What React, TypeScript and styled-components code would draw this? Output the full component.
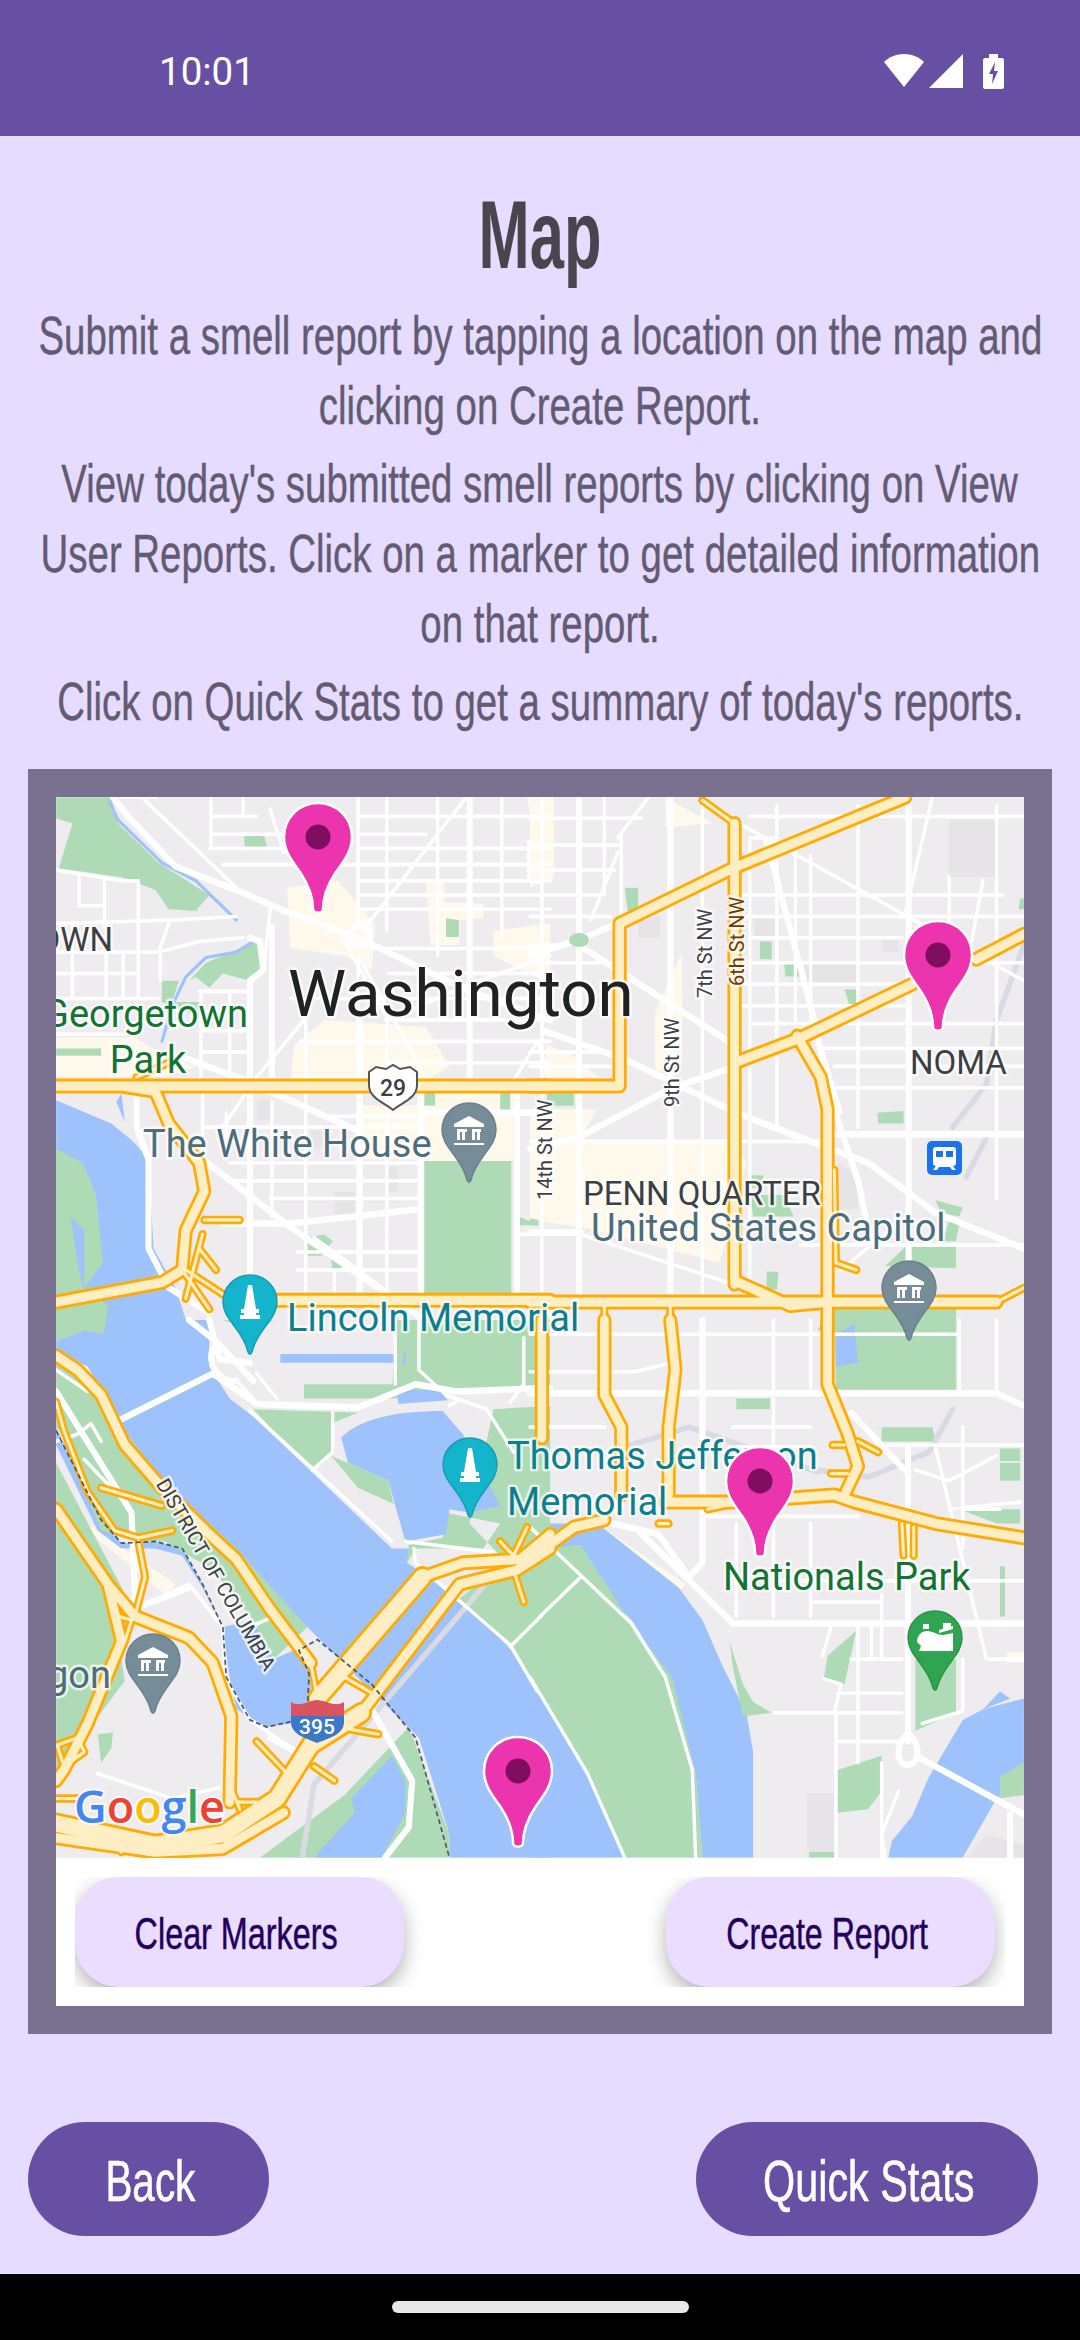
import React from 'react'
import styled, { createGlobalStyle } from 'styled-components'

const GlobalStyle = createGlobalStyle`
	html, body {
		margin: 0;
		padding: 0;
		background: #000;
	}
`

const Screen = styled.div`
	width: 1080px;
	height: 2340px;
	display: flex;
	flex-direction: column;
	overflow: hidden;
	background: #e5dcff;
	font-family: 'Liberation Sans', Arial, sans-serif;
`

const StatusBar = styled.div`
	height: 136px;
	flex: none;
	box-sizing: border-box;
	padding: 52px 76px 0 159px;
	display: flex;
	justify-content: space-between;
	align-items: flex-start;
	background: #674fa3;
	color: #fff;
`

const Clock = styled.span`
	font-family: Roboto, sans-serif;
	font-size: 38.5px;
	line-height: 40px;
	font-weight: 400;
`

const StatusIcons = styled.div`
	display: flex;
	align-items: flex-start;
	gap: 5px;
	margin-top: 2px;
`

const Main = styled.main`
	flex: 1;
	display: flex;
	flex-direction: column;
	padding-top: 39px;
`

const Title = styled.h1`
	margin: 0 0 6px;
	display: flex;
	justify-content: center;
	font-size: 96px;
	line-height: 120px;
	font-weight: 700;
	color: #49454f;
`

const Para = styled.p`
	margin: 0 0 8px;
	display: flex;
	flex-direction: column;
	align-items: center;
	font-size: 53px;
	line-height: 70px;
	color: #625b71;
	-webkit-text-stroke: 0.4px #625b71;
`

const Squeezed = styled.span<{ $sx: number }>`
	flex: none;
	display: block;
	white-space: nowrap;
	transform: scaleX(${p => p.$sx});
`

const MapFrame = styled.section`
	margin: 24px 28px 0;
	height: 1265px;
	box-sizing: border-box;
	border: 28px solid #79718f;
	background: #fff;
	display: flex;
	flex-direction: column;
`

const MapCanvas = styled.svg`
	display: block;
	width: 968px;
	height: 1061px;
	flex: none;
	background: #efecf0;
`

const MapActions = styled.div`
	margin: 19px 19px 19px;
	padding-right: 10px;
	height: 110px;
	display: flex;
	justify-content: space-between;
	overflow: hidden;
`

const MapButton = styled.button`
	width: 329px;
	height: 110px;
	padding: 4px 7px 0 0;
	border: none;
	border-radius: 44px;
	display: flex;
	align-items: center;
	justify-content: center;
	background: #eaddff;
	color: #21005d;
	font-family: inherit;
	font-size: 44px;
	-webkit-text-stroke: 0.5px #21005d;
	box-shadow: 0 8px 20px rgba(0, 0, 0, 0.3);
`

const BottomRow = styled.div`
	margin-top: auto;
	padding: 0 42px 38px 28px;
	display: flex;
	justify-content: space-between;
`

const NavButton = styled.button<{ $width: number }>`
	width: ${p => p.$width}px;
	height: 114px;
	padding: 3px 0 0 3px;
	border: none;
	border-radius: 57px;
	display: flex;
	align-items: center;
	justify-content: center;
	background: #674fa3;
	color: #fff;
	font-family: inherit;
	font-size: 57px;
	-webkit-text-stroke: 0.6px #fff;
`

const GestureBar = styled.div`
	height: 66px;
	flex: none;
	display: flex;
	justify-content: center;
	padding-top: 27px;
	box-sizing: border-box;
	background: #000;
`

const GestureHandle = styled.div`
	width: 297px;
	height: 12px;
	border-radius: 6px;
	background: #e8e8e8;
`

const Label = styled.text<{ $color: string; $size: number }>`
	font-family: Roboto, sans-serif;
	font-size: ${p => p.$size}px;
	fill: ${p => p.$color};
	paint-order: stroke;
	stroke: rgba(255, 255, 255, 0.72);
	stroke-width: 5px;
	stroke-linejoin: round;
`

const ShieldText = styled.text<{ $color: string; $size: number }>`
	font-family: Roboto, sans-serif;
	font-weight: 500;
	font-size: ${p => p.$size}px;
	fill: ${p => p.$color};
	text-anchor: middle;
`

const GoogleMark = styled.text`
	font-family: 'Open Sans', Roboto, sans-serif;
	font-size: 45px;
	font-weight: 600;
	paint-order: stroke;
	stroke: rgba(255, 255, 255, 0.8);
	stroke-width: 4px;
`

// each sheet holds shapes in the coordinates of one map quarter, its transform is in SHEET_MATRIX
type Sheet = {
	tint: string
	block: string
	water: string
	park: string
	pond: string
	creek: string
	rail: string
	street: string
	avenue: string
	ramp: string
	highway: string
	trunk: string
}

const SHEET_MATRIX = [
	'matrix(.3381 0 0 .3571 20 770)',
	'matrix(.3381 0 0 .3571 530 770)',
	'matrix(.3381 0 0 .3571 20 1320)',
	'matrix(.3381 0 0 .3571 530 1320)',
]

const SHEETS: Sheet[] = [
	{
		tint: 'M790 330L940 310L1050 430L1040 560L960 520L800 500Z M1200 310H1255V370L1370 375V415L1300 420V490H1215Z M1400 450L1568 430V600L1400 520Z M810 770L900 700L1200 720L1270 830L1200 870H800Z M107 750H340L430 800L520 830L430 860H107Z M1500 76H1568V300L1530 260Z M1190 900H1460V1095H1190Z M1000 940H1200V1090H1000Z',
		block: 'M860 1010H900V1060H860Z M1090 1110H1120V1180H1090Z M930 1180H990V1250H930Z M700 925H740V980H700Z',
		water: 'M107 925L270 990L335 1040L380 1090L395 1340L460 1450L500 1568H107Z M285 930L300 905L310 985Z',
		park: 'M107 76H270L290 150L410 260L560 350L520 395L440 390L400 335L300 300L115 275L155 150L107 135Z M662 180L720 175L730 215H665Z M1260 415L1298 420V468H1260Z M500 590L550 540L700 480L710 560L680 590L600 570L560 610L520 580Z M420 590H470L450 650H530V690L420 650Z M107 780H240V800H107Z M1196 1095H1453V1470H1196Z M1475 1250L1535 1275H1475Z M1420 900H1450V960H1420Z M1196 900H1228V940H1196Z M107 1060L185 1100L225 1190L245 1380L190 1450L260 1500L250 1568H107Z M850 1310L900 1300L925 1320L890 1360H850Z M920 1370L960 1390L925 1400Z M340 1040L380 1100L370 1090Z',
		pond: 'M150 1250L190 1290V1460L170 1380Z',
		creek: 'M265 90L290 140L420 260L520 310L640 420 M690 480L640 510L550 525L490 580L450 660L420 760',
		rail: '',
		street:
			'M565 76V215 M660 76V130 M740 110L780 230 M1000 76V440 M1085 76V450 M1235 76V520 M1425 76V470 M1505 200V300 M1000 520V1470 M1085 700V1470 M845 700V1470 M745 440V860 M175 300V380 M250 310V440 M350 310V640 M155 430V640 M255 430V640 M305 510V640 M415 510V590 M535 620V860 M620 620V860 M540 910V1080 M610 960V1090 M745 930V1250 M930 1400V1470 M565 130H700 M565 180H780 M560 220H780 M600 265H1568 M1000 130H1568 M1000 180H1200 M1000 220H1568 M1000 310H1568 M1000 350H1500 M1000 390H1568 M107 280L300 310H350 M175 380H250 M107 430L450 420L640 410 M107 510H410L530 480L660 470 M107 570H350 M107 640H410 M530 620H680 M107 740H340 M535 730H680 M535 790H680 M800 640H1568 M1040 500H1568 M1090 570H1568 M1080 700H1568 M830 760H1568 M1090 820H1568 M900 970H1190 M540 1000H1190 M620 1100H1180 M620 1150H1180 M740 1200H1180 M820 1350H1180 M820 1400H1180 M1470 1300H1568 M1030 430L1320 76 M840 700L700 860L600 1000 M1000 520L1200 860 M960 480L1090 700 M740 390L720 560 M1460 870L1530 760L1568 870 M1568 520L1330 600L1090 700 M870 1310L1100 1470 M300 76L400 76 M360 76L640 330 M440 430L410 510',
		avenue:
			'M275 76L320 130L460 270L650 340L770 390L1000 470L1330 620L1568 700 M1330 76V900 M680 590V1470 M745 860V440 M470 800L640 860L690 880L1000 1010 M540 1090L800 1280L1180 1530 M345 900V1000L380 1090V1340L440 1450L560 1520 M600 1270H800L1180 1230 M1005 700V1470 M1190 960H1568 M1470 900V1470 M1185 900V1470 M680 470L710 480L720 560L680 590 M1005 465m-30 0a30 30 0 1 0 60 0a30 30 0 1 0 -60 0',
		ramp: 'M545 1260H650 M490 1400L620 1480 M530 1340L580 1400 M480 1400L560 1510 M540 1300L490 1480 M345 860L440 820',
		highway: 'M107 885H1568 M480 1400L420 1435L107 1490 M300 885L400 900L440 990L530 1100L545 1180L490 1290L480 1400 M620 1485H1568',
		trunk: '',
	},
	{
		tint: 'M0 76H70V300L0 330Z M400 76L540 150L400 160Z M0 950H200L140 1040H600L640 1100L590 1280L560 1380L400 1340L150 1280L0 1260Z M370 680L450 510V820L370 850Z M50 770L130 800L200 860H40Z',
		block: 'M1240 140H1380V300H1240Z M810 540H965V605H820Z M660 415H730L735 470H665Z M1040 475H1090V510H1040Z M320 410H385V470H320Z M910 1100L970 1130V1230H910Z',
		water: '',
		park: 'M280 330H320V390L290 400Z M680 480H715V530H680Z M752 540H790L800 578H755Z M930 615H965V660H945Z M1028 960L1105 955V990H1030Z M50 900L130 905V940H50Z M650 1190H750L780 1250H660Z M700 1405H735L730 1455H700Z M1050 1390L1110 1335H1260V1395Z M1200 1205L1280 1225L1270 1250L1215 1240Z M1240 1260L1270 1270L1260 1320H1220Z M900 1500H1260V1568H850Z M1450 360H1461V390H1445Z M0 1255L25 1260V1275H0Z M655 1135H690V1170H655Z',
		pond: '',
		creek: '',
		rail: 'M1461 490L1380 700L1350 880L1250 1000 M1350 1030L1290 1140',
		street:
			'M35 76V1470 M220 76V350 M270 180V560 M510 76V1470 M650 200V1470 M730 100V1000 M785 200V700 M830 240V700 M970 100V1000 M1240 300V650 M1380 100V1200 M270 700V900 M0 135H330 M0 210H270 M0 280H250 M0 350H210 M0 410H240 M0 490H100 M0 540H280 M0 790H250 M0 830H250 M650 130H1461 M650 190H720 M620 350H1400 M620 410H1461 M650 470H1100 M650 540H1461 M620 600H1100 M620 660H1120 M650 710H1461 M870 780H1461 M900 830H1461 M900 890H1461 M0 1040H860 M0 1300H150L600 1440 M800 1330H1461 M260 230L180 420 M350 76L260 190 M1190 76L1110 400 M1461 590L620 150 M850 740L920 960 M1340 310L1290 560 M920 1400L1100 1260',
		avenue:
			'M145 76V1470 M415 76V1470 M1120 76V1470 M700 200L830 660L900 950L970 1150L1010 1330 M0 520L145 475L260 430 M160 500L620 780 M40 730L280 810L610 960L830 1040L1000 1100L1200 1240L1461 1340 M0 1060L140 1030L420 890L610 830 M900 1020H1461 M0 1295H150',
		ramp: 'M220 1490V1568 M415 1490V1568 M510 85L605 150 M905 1380L965 1400 M1380 1490L1461 1450 M900 1120L905 1380',
		highway:
			'M0 885H265V430L600 275L1110 76 M605 150V1440 M605 820L800 750L1130 600 M1320 530L1461 460 M790 745L860 860L880 950V1568 M0 1490H1380 M605 1430L770 1500L880 1490',
		trunk: '',
	},
	{
		tint: 'M200 570L460 740L430 770L200 590Z',
		block: '',
		water:
			'M107 0H560V130L620 220L690 270L1100 640H1160L1145 680L1300 780L1450 920L1568 1070V1505H1270V1440L1180 1170L1050 1050L850 860L640 660L500 560L420 470L280 270L200 130L107 90Z M600 860L620 1000L640 1090L730 1140L800 1130L860 1090V990L820 920L750 950L690 840Z M107 300L240 560L300 625L400 620L480 640L540 740L600 860L540 750L480 660L400 640H300L230 590L107 350Z',
		park: 'M107 90L280 270L420 450L640 640L850 860L750 950L690 840L570 700L430 620H350L240 590L130 320L107 300Z M107 400L340 820L300 950L310 1010L200 1150L107 1270Z M107 0H230L250 40L190 30L107 60Z M1110 0H1568V200H1270L1100 220Z M840 180H1110V220H840Z M690 250L1000 260L920 290L930 370L860 420Z M920 380L1090 450L1105 515L1000 470Z M1145 680L1170 640H1370L1420 570L1260 540L1250 610L1150 630Z M1400 250L1568 240V600L1480 680H1440L1330 570Z M1380 720L1568 640V1100L1450 910L1300 780Z M710 1505L960 1330L1090 1200L1150 1140L1270 1440V1505Z M230 1160L275 1155L270 1200L240 1240Z M600 0H750L700 30Z',
		pond: 'M770 95H1110V120H770Z M1115 210L1130 195H1240L1265 225L1120 235Z M950 330C1000 280 1100 255 1250 255L1310 320L1420 520L1330 540L1270 530L1260 600L1140 620L1110 520L1090 450L970 400Z M1130 120L1140 80V125Z M980 1340L1100 1220L1140 1290V1380L1070 1505H870L990 1380Z',
		creek: '',
		rail: 'M1390 725L870 1300L835 1505',
		street:
			'M1180 0V140L1260 210L1380 250L1460 370 M1165 640L1170 680L1450 910L1530 1040 M1140 620L1400 650 M680 255L1100 620 M1540 830L1450 915 M690 855L740 835 M360 800L500 740L600 860L605 1000L680 1120L820 1210 M170 320L210 290L240 340 M107 140L200 200 M107 340L170 320 M190 390L320 520 M230 1270L450 1340L590 1310 M925 260V370L865 420 M1490 50V180L1450 230 M700 150L760 220 M650 180L690 220 M1110 0V180 M1290 230L1270 240',
		avenue:
			'M285 285L570 150 M570 150L700 235L1000 245L1170 180L1290 200L1568 190 M107 200L330 540L340 780 M1040 1090L1160 1290L1150 1420L1080 1505 M570 80C550 130 600 180 640 170 M560 0L590 110L680 120 M500 0L580 60L690 170 M740 1170L820 1210 M360 800L500 750',
		ramp: 'M107 230L130 310L200 480L280 590L350 610L450 590 M350 620L370 720L340 830 M240 470L420 520 M860 960L880 1060L960 1000L1050 1050 M1420 620L1460 660L1500 580 M1460 700L1490 790 M700 1180L790 1270 M870 1250L930 1290 M110 1190L170 1170L190 1210L130 1250Z M290 830L330 840L310 900L290 860Z M250 1440L300 1490 M640 1350H700 M880 1130L1060 1160 M107 1340H180 M620 1300L650 1370',
		highway:
			'M107 100L170 140L240 210L310 350L420 470L560 600L640 670L740 810L860 960 M107 530L260 740L340 830 M340 830L500 890L570 960L625 1110L620 1350 M260 740L300 900L200 1130L130 1260L107 1290 M107 1450L400 1490L600 1480L780 1380 M1010 1100L1300 740L1470 700L1568 640 M1190 720L1310 680L1480 670L1568 600',
		trunk: 'M107 1410L400 1470L600 1440L760 1340L860 1190L1010 1100 M880 1060L1190 720',
	},
	{
		tint: 'M200 570L460 740L430 770L200 590Z M1410 930H1461V960H1410Z',
		block: 'M820 1325H900V1490H820Z M1350 1440L1461 1470V1505H1290Z',
		water:
			'M30 570H200L440 750L510 840L570 970L640 1100L660 1210V1505H510L490 1270L420 1020L300 840L150 700L50 660L0 690V570Z M0 1000L180 1290L280 1505H0Z M1060 1505L1070 1460L1130 1390L1180 1280L1280 1120L1340 1090L1461 1060V1300L1380 1340L1280 1505Z M1390 1040L1420 1060L1340 1090Z',
		park: 'M610 220H710V250H610Z M1040 300H1190L1200 340H1040Z M1390 360H1450V395H1390Z M1390 400H1450V450H1390Z M1270 530H1450V570H1380Z M900 0H1260V195H905Z M1140 950H1260V1100L1140 1150Z M880 940L965 870L930 1020L870 1000Z M910 1260L1040 1220V1320L1000 1370L910 1380Z M590 900L600 970L630 1110L715 1100L660 1070L630 1020Z M1390 690H1405V830H1390Z M0 680L50 640L150 630L300 850L420 1000L490 1270L510 1505H280L180 1290L0 990Z M1390 1280L1461 1240V1330L1390 1340Z M825 1490H900V1505H825Z',
		pond: 'M905 40L960 10L970 120L905 130Z',
		creek: '',
		rail: 'M850 420L1000 440L1180 370L1250 250 M300 350L470 300L850 425',
		street:
			'M720 0V200 M720 220V830 M830 0V190 M1270 0V200 M1380 0V200 M610 570V830 M830 570V830 M1040 770V950 M970 860V1240 M1010 860V950 M905 1100V1505 M1040 1240V1505 M0 40H1270 M0 145H310L420 120 M600 300H830 M610 355H830 M520 550H970 M1060 350H1461 M0 300H220 M720 730H1461 M830 790H1040 M950 950H1100 M910 1045H1100 M905 1100H1100 M720 1100H900 M905 1180H1100 M1200 360L1350 950H1461 M1140 420L1240 450L1380 380 M1240 530L1450 510 M30 830L150 720 M0 580L300 850L400 1000L480 1260L490 1505 M0 1000L170 1270L280 1505 M870 1005L920 1020L900 1100 M865 940L890 860 M1160 1130L1280 1095V950 M1090 1320L1040 1440L1050 1505 M1280 300V640 M1280 530H1390',
		avenue:
			'M510 0V680 M1118 360V1180 M0 205H1380L1461 240 M320 590L580 830L600 850H1461 M200 560L380 600L470 720 M950 260L1118 430 M1150 1225L1461 1385 M1420 1385V1505 M1118 1160C1080 1180 1080 1250 1118 1245C1160 1245 1150 1170 1118 1160 M470 720L510 680',
		ramp: 'M970 340L1030 370 M1100 570L1105 660 M1135 580V660 M895 350H930 M890 430H940 M380 570H410 M525 530L600 515',
		highway: 'M35 0V330 M220 0V210L270 300V490 M415 0L430 140L410 300V490 M880 0V180L940 320L970 410L930 490 M400 510H600L900 490L960 510L1200 570L1461 610 M0 670L130 580L220 560',
		trunk: '',
	},
]

type LayerProps = React.SVGProps<SVGPathElement> & { sheetKey: keyof Sheet }

function Layer({ sheetKey, ...rest }: LayerProps) {
	return (
		<>
			{SHEETS.map((sheet, i) => (
				<path key={i} transform={SHEET_MATRIX[i]} d={sheet[sheetKey]} {...rest} />
			))}
		</>
	)
}

function lineProps(stroke: string, strokeWidth: number) {
	return { fill: 'none', stroke, strokeWidth, strokeLinejoin: 'round' as const, strokeLinecap: 'round' as const }
}

const PIN_PATH =
	'M0 -34C19 -34 34 -19 34 0C34 14 26 24 18 35C10 47 5 60 5 72C5 77 -5 77 -5 72C-5 60 -10 47 -18 35C-26 24 -34 14 -34 0C-34 -19 -19 -34 0 -34Z'

function Marker({ x, y }: { x: number; y: number }) {
	return (
		<g transform={`translate(${x} ${y})`}>
			<path d={PIN_PATH} fill="#ec34ae" stroke="#fff" strokeWidth="2.5" />
			<circle r="12.5" fill="#7f0f5e" />
		</g>
	)
}

const POI_PATH = 'M0 -27C15 -27 27 -15 27 0C27 10 21 17 15 25C9 33 4 41 2 50C1 53 -1 53 -2 50C-4 41 -9 33 -15 25C-21 17 -27 10 -27 0C-27 -15 -15 -27 0 -27Z'

function Poi({ x, y, fill, edge, children }: { x: number; y: number; fill: string; edge: string; children: React.ReactNode }) {
	return (
		<g transform={`translate(${x} ${y})`}>
			<path d={POI_PATH} fill={fill} stroke={edge} strokeWidth="1.5" />
			{children}
		</g>
	)
}

const Museum = () => (
	<path
		fill="#fff"
		d="M0 -14L15 -6V-3H-15V-6Z M-12 -1H-2V2H-4V10H-7V2H-9V10H-12Z M3 -1H12V2H11V10H8V2H6V10H3Z M-15 13H15V15H-15Z"
	/>
)

const Monument = () => (
	<path
		fill="#fff"
		d="M-2 -17H2L6 7H9V11H6V13H10V17H-10V13H-6V11H-9V7H-6Z"
	/>
)

const Stadium = () => (
	<g fill="#fff">
		<path d="M-18 4C-18 -4 -12 -7 -8 -7C-2 -7 2 -3 8 -3L18 -5V13H-16L-14 8Z" />
		<path d="M-12 -14H-6V-9H-12Z M8 -15H16V-9H8Z M4 -8L18 -12V-9L4 -5Z" />
	</g>
)

function MapArt() {
	return (
		<MapCanvas viewBox="56 797 968 1061">
			<Layer sheetKey="tint" fill="#fff9ec" />
			<Layer sheetKey="block" fill="#e7e4e8" />
			<Layer sheetKey="water" fill="#9ec2fb" />
			<Layer sheetKey="park" fill="#aedbb6" />
			<Layer sheetKey="pond" fill="#9ec2fb" />
			<Layer sheetKey="creek" {...lineProps('#9ec2fb', 9)} />
			<Layer sheetKey="rail" {...lineProps('#d9dae2', 16)} />
			<Layer sheetKey="street" {...lineProps('#ffffff', 10)} />
			<Layer sheetKey="avenue" {...lineProps('#ffffff', 18)} />
			<ellipse cx="579" cy="940" rx="10" ry="7" fill="#aedbb6" />
			<Layer sheetKey="trunk" {...lineProps('#ffab00', 62)} />
			<Layer sheetKey="ramp" {...lineProps('#ffab00', 24)} />
			<Layer sheetKey="highway" {...lineProps('#ffab00', 42)} />
			<Layer sheetKey="trunk" {...lineProps('#ffedc4', 46)} />
			<Layer sheetKey="ramp" {...lineProps('#ffedc4', 9)} />
			<Layer sheetKey="highway" {...lineProps('#ffedc4', 26)} />

			<path
				transform={SHEET_MATRIX[2]}
				d="M107 310L240 560L300 625L400 620L480 640L540 740L600 860L610 1000L680 1120L730 1140L800 1125 M850 1090L855 990L825 925L880 895L1040 1020L1170 1170L1270 1505"
				fill="none"
				stroke="#4b5a6b"
				strokeWidth="5"
				strokeDasharray="14 9"
			/>

			<Label $size={33} $color="#3c4043" x="113" y="951" textAnchor="end">OWN</Label>
			<Label $size={38} $color="#137333" x="248" y="1027" textAnchor="end">Georgetown</Label>
			<Label $size={38} $color="#137333" x="148" y="1073" textAnchor="middle">Park</Label>
			<Label $size={65.5} $color="#202124" x="288" y="1016">Washington</Label>
			<Label $size={38} $color="#4e6d7c" x="143" y="1157">The White House</Label>
			<Label $size={38} $color="#0b7f8f" x="287" y="1331">Lincoln Memorial</Label>
			<Label $size={33} $color="#3c4043" x="910" y="1074">NOMA</Label>
			<Label $size={33} $color="#3c4043" x="583" y="1205">PENN QUARTER</Label>
			<Label $size={38} $color="#4e6d7c" x="591" y="1241">United States Capitol</Label>
			<Label $size={38} $color="#0b7f8f" x="507" y="1469">Thomas Jefferson</Label>
			<Label $size={38} $color="#0b7f8f" x="507" y="1515">Memorial</Label>
			<Label $size={38} $color="#137333" x="723" y="1590">Nationals Park</Label>
			<Label $size={38} $color="#4e6d7c" x="111" y="1688" textAnchor="end">gon</Label>
			<Label $size={20} $color="#3c4043" transform="translate(552 1200) rotate(-90)">14th St NW</Label>
			<Label $size={20} $color="#3c4043" transform="translate(679 1107) rotate(-90)">9th St NW</Label>
			<Label $size={20} $color="#3c4043" transform="translate(712 998) rotate(-90)">7th St NW</Label>
			<Label $size={20} $color="#6b3b00" transform="translate(744 986) rotate(-90)">6th St NW</Label>
			<Label $size={20} $color="#3c4043" textAnchor="middle" transform="translate(210 1578) rotate(60)">DISTRICT OF COLUMBIA</Label>

			<path d="M369 1072L376 1067L386 1069L393 1065L400 1069L410 1067L417 1072V1085C417 1098 403 1102 393 1110C383 1102 369 1098 369 1085Z" fill="#fff" stroke="#555" strokeWidth="2" />
			<ShieldText $size={23} $color="#3c4043" x="393" y="1096">29</ShieldText>

			<path d="M291 1702C300 1708 310 1700 317 1700C325 1700 335 1708 344 1702V1716H291Z" fill="#d9545e" />
			<path d="M291 1716H344V1722C344 1734 330 1738 317 1743C305 1738 291 1734 291 1722Z" fill="#3c78c8" />
			<ShieldText $size={21} $color="#fff" x="317" y="1734">395</ShieldText>

			<Poi x={469} y={1130} fill="#768c99" edge="#6b818e"><Museum /></Poi>
			<Poi x={909} y={1288} fill="#768c99" edge="#6b818e"><Museum /></Poi>
			<Poi x={153} y={1661} fill="#768c99" edge="#6b818e"><Museum /></Poi>
			<Poi x={250} y={1302} fill="#14b4cc" edge="#1a9cae"><Monument /></Poi>
			<Poi x={470} y={1465} fill="#14b4cc" edge="#1a9cae"><Monument /></Poi>
			<Poi x={935} y={1638} fill="#2fa551" edge="#2b9449"><Stadium /></Poi>

			<rect x="927" y="1141" width="35" height="34" rx="5" fill="#1a73e8" />
			<path d="M936 1147H953C955 1147 956 1148 956 1150V1163C956 1165 955 1166 953 1166L956 1170H952L950 1167H939L937 1170H933L936 1166C934 1166 933 1165 933 1163V1150C933 1148 934 1147 936 1147Z" fill="#fff" />
			<path d="M936 1151H943V1157H936Z M946 1151H953V1157H946Z" fill="#1a73e8" />

			<GoogleMark x="74" y="1823">
				<tspan fill="#4285f4">G</tspan>
				<tspan fill="#ea4335">o</tspan>
				<tspan fill="#fbbc05">o</tspan>
				<tspan fill="#4285f4">g</tspan>
				<tspan fill="#34a853">l</tspan>
				<tspan fill="#ea4335">e</tspan>
			</GoogleMark>

			<Marker x={318} y={837} />
			<Marker x={938} y={955} />
			<Marker x={760} y={1481} />
			<Marker x={518} y={1771} />
		</MapCanvas>
	)
}

function App() {
	return (
		<Screen>
			<GlobalStyle />
			<StatusBar>
				<Clock>10:01</Clock>
				<StatusIcons>
					<svg width="40" height="33" viewBox="0 0 40 33">
						<path d="M0 8C5 3 12 0 20 0C28 0 35 3 40 8L20 33Z" fill="#fff" />
					</svg>
					<svg width="34" height="34" viewBox="0 0 34 34">
						<path d="M34 0V34H0Z" fill="#fff" />
					</svg>
					<svg width="21" height="35" viewBox="0 0 21 35" style={{ marginLeft: 15 }}>
						<path d="M6 0H15V4H19C20 4 21 5 21 6V33C21 34 20 35 19 35H2C1 35 0 34 0 33V6C0 5 1 4 2 4H6Z" fill="#fff" />
						<path d="M12 8L6 20H10L9 30L15 17H11Z" fill="#674fa3" />
					</svg>
				</StatusIcons>
			</StatusBar>
			<Main>
				<Title>
					<Squeezed $sx={0.64}>Map</Squeezed>
				</Title>
				<Para>
					<Squeezed $sx={0.725}>Submit a smell report by tapping a location on the map and</Squeezed>
					<Squeezed $sx={0.725}>clicking on Create Report.</Squeezed>
				</Para>
				<Para>
					<Squeezed $sx={0.725}>View today's submitted smell reports by clicking on View</Squeezed>
					<Squeezed $sx={0.725}>User Reports. Click on a marker to get detailed information</Squeezed>
					<Squeezed $sx={0.725}>on that report.</Squeezed>
				</Para>
				<Para>
					<Squeezed $sx={0.725}>Click on Quick Stats to get a summary of today's reports.</Squeezed>
				</Para>
				<MapFrame>
					<MapArt />
					<MapActions>
						<MapButton>
							<Squeezed $sx={0.735}>Clear Markers</Squeezed>
						</MapButton>
						<MapButton>
							<Squeezed $sx={0.73}>Create Report</Squeezed>
						</MapButton>
					</MapActions>
				</MapFrame>
				<BottomRow>
					<NavButton $width={241}>
						<Squeezed $sx={0.71}>Back</Squeezed>
					</NavButton>
					<NavButton $width={342}>
						<Squeezed $sx={0.725}>Quick Stats</Squeezed>
					</NavButton>
				</BottomRow>
			</Main>
			<GestureBar>
				<GestureHandle />
			</GestureBar>
		</Screen>
	)
}

export default App
